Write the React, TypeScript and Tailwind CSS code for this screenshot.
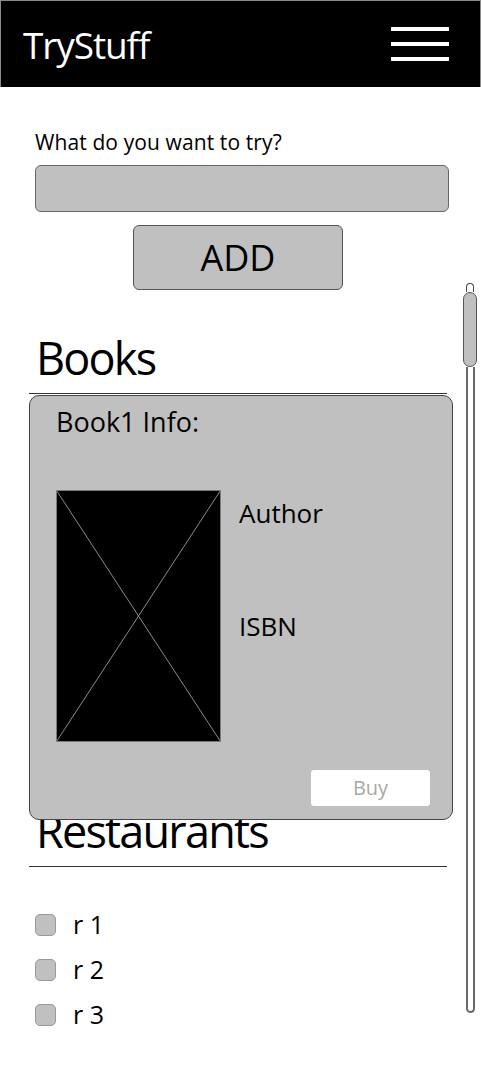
import React from 'react';

const restaurants = ['r 1', 'r 2', 'r 3'];

function Hamburger() {
    return (
        <div className="flex flex-col gap-[11px]">
            <span className="block w-[58px] h-[4px] bg-white" />
            <span className="block w-[58px] h-[4px] bg-white" />
            <span className="block w-[58px] h-[4px] bg-white" />
        </div>
    );
}

function Placeholder() {
    return (
        <svg width="165" height="252" viewBox="0 0 165 252" className="block shrink-0">
            <rect x="0.5" y="0.5" width="164" height="251" fill="#000" stroke="#7a7a7a" />
            <line x1="0.5" y1="0.5" x2="164.5" y2="251.5" stroke="#8a8a8a" strokeWidth="1" />
            <line x1="164.5" y1="0.5" x2="0.5" y2="251.5" stroke="#8a8a8a" strokeWidth="1" />
        </svg>
    );
}

function Scrollbar() {
    return (
        <div className="flex flex-col items-center w-[14px] pt-[196px]">
            <div className="w-[8px] h-[9px] rounded-t-full border border-b-0 border-[#444] bg-white" />
            <div className="w-[14px] h-[75px] rounded-full border border-[#555] bg-[#c0c0c0]" />
            <div className="w-[9px] h-[646px] rounded-b-full border-2 border-t-0 border-[#6a6a6a] bg-white" />
        </div>
    );
}

export default function App() {
    return (
        <div className="w-[481px] min-h-[1080px] bg-white text-black font-['Open_Sans',sans-serif]">
            <header className="h-[87px] bg-black border border-b-0 border-[#8a8a8a] flex items-center justify-between pl-[22px] pr-[31px]">
                <span className="text-white text-[37px] leading-none tracking-[-0.03em]">TryStuff</span>
                <Hamburger />
            </header>

            <div className="flex">
                <main className="w-[453px] pl-[29px] pt-[45px] pb-[40px]">
                    <label className="block ml-[6px] text-[21px] leading-none tracking-[0.005em]">What do you want to try?</label>
                    <input
                        type="text"
                        className="block ml-[6px] mt-[12px] w-[414px] h-[47px] rounded-[6px] border border-[#666] bg-[#c0c0c0] outline-none"
                    />
                    <button
                        type="button"
                        className="block ml-[104px] mt-[13px] w-[210px] h-[65px] rounded-[6px] border border-[#555] bg-[#c0c0c0] text-[36px] leading-none"
                    >
                        ADD
                    </button>

                    <h2 className="mt-[45px] w-[418px] pl-[7px] pb-[13px] border-b border-[#333] text-[45px] leading-none tracking-[-0.04em]">
                        Books
                    </h2>

                    <section className="relative z-10 mt-[1px] w-[424px] rounded-[10px] border border-[#444] bg-[#c0c0c0] pl-[26px] pr-[22px] pt-[12px] pb-[13px]">
                        <h3 className="text-[27px] leading-none">Book1 Info:</h3>
                        <div className="mt-[55px] flex gap-[18px]">
                            <Placeholder />
                            <div className="pt-[10px] text-[26px] leading-none">
                                <p>Author</p>
                                <p className="mt-[87px]">ISBN</p>
                            </div>
                        </div>
                        <div className="mt-[28px] flex justify-end">
                            <button
                                type="button"
                                className="w-[119px] h-[36px] rounded-[3px] bg-white text-[20px] leading-none text-[#a8a8a8]"
                            >
                                Buy
                            </button>
                        </div>
                    </section>

                    <h2 className="-mt-[12px] w-[418px] pl-[7px] pb-[13px] border-b border-[#333] text-[45px] leading-none tracking-[-0.04em]">
                        Restaurants
                    </h2>

                    <ul className="mt-[45px] ml-[6px] flex flex-col gap-[20px]">
                        {restaurants.map((r) => (
                            <li key={r} className="flex items-center h-[25px]">
                                <span className="block w-[21px] h-[22px] rounded-[5px] border border-[#999] bg-[#c0c0c0]" />
                                <span className="ml-[17px] text-[25px] leading-none">{r}</span>
                            </li>
                        ))}
                    </ul>
                </main>
                <div className="ml-[10px]">
                    <Scrollbar />
                </div>
            </div>
        </div>
    );
}
